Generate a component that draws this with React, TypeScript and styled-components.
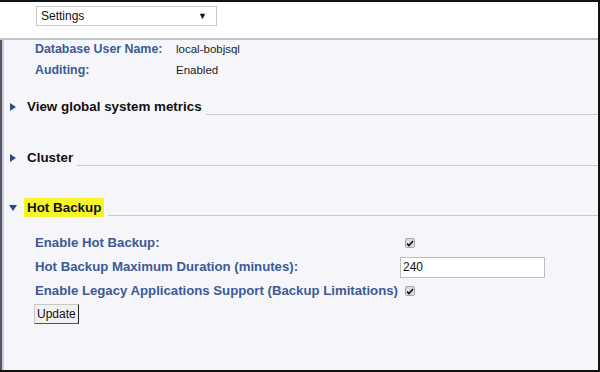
import React from "react";
import styled, {createGlobalStyle} from "styled-components";

const GlobalStyle = createGlobalStyle`
  html, body {
    margin: 0;
    padding: 0;
    background: #ffffff;
  }
  body {
    font-family: "Liberation Sans", Arial, sans-serif;
    font-size: 12px;
  }
`;

const Frame = styled.div`
  width: 600px;
  height: 372px;
  box-sizing: border-box;
  border-top: 2px solid #111;
  border-right: 2px solid #111;
  border-bottom: 2px solid #111;
  display: flex;
  flex-direction: column;
  overflow: hidden;
`;

const TopBar = styled.div`
  height: 38px;
  flex: none;
  background: #ffffff;
  border-bottom: 2px solid #bcc6ca;
  padding: 4px 0 0 36px;
  box-sizing: border-box;
`;

const FakeSelect = styled.div`
  width: 181px;
  height: 20px;
  box-sizing: border-box;
  border: 1px solid #c9c9c9;
  background: #fff;
  display: flex;
  align-items: center;
  justify-content: space-between;
  padding: 0 9px 0 4px;
  font-size: 12px;
  color: #111;
`;

const Caret = styled.span`
  font-size: 9px;
  color: #111;
`;

const Panel = styled.div`
  flex: 1;
  background: #f6f6fa;
  border-left: 2px solid #55555f;
  box-shadow: inset 2px 0 0 #c9cde6;
  padding: 1px 0 0 0;
  display: flex;
  flex-direction: column;
`;

const InfoGrid = styled.div`
  display: grid;
  grid-template-columns: 141px auto;
  row-gap: 4px;
  padding-left: 33px;
`;

const Label = styled.span`
  font-weight: bold;
  color: #3b5a96;
  font-size: 12.4px;
  line-height: 17px;
  white-space: nowrap;
`;

const Value = styled.span`
  color: #1a1a1a;
  font-size: 11.5px;
  line-height: 17px;
`;

const SectionHeader = styled.div<{ $top: number }>`
  display: flex;
  align-items: flex-end;
  margin-top: ${p => p.$top}px;
  padding-left: 6px;
  height: 19px;
`;

const Arrow = styled.span`
  width: 10px;
  display: flex;
  align-items: center;
  justify-content: center;
  margin-right: 9px;
  align-self: center;
`;

const Title = styled.span<{ $highlight?: boolean }>`
  font-weight: bold;
  font-size: 13.4px;
  color: #111;
  line-height: 19px;
  padding: 0 ${p => (p.$highlight ? "3px" : "0")};
  margin-left: ${p => (p.$highlight ? "-3px" : "0")};
  background: ${p => (p.$highlight ? "#f7f529" : "transparent")};
  white-space: nowrap;
`;

const Rule = styled.div`
  flex: 1;
  height: 0;
  border-bottom: 1px solid #c3c7d3;
  margin-left: 4px;
  margin-bottom: 1px;
`;

const FormRows = styled.div`
  display: grid;
  grid-template-columns: 368px auto;
  grid-auto-rows: 24px;
  padding-left: 33px;
  margin-top: 14px;
  align-items: center;
`;

const FormLabel = styled(Label)`
  font-size: 13.2px;
  line-height: 22px;
`;

const CheckBox = styled.span`
  width: 10px;
  height: 10px;
  margin-left: 2px;
  box-sizing: border-box;
  border: 1px solid #a6a6a6;
  border-radius: 2px;
  background: #dcdcdc;
  display: flex;
  align-items: center;
  justify-content: center;
`;

const NumberInput = styled.div`
  width: 145px;
  height: 21px;
  margin-left: -3px;
  box-sizing: border-box;
  border: 1px solid #bdbdbd;
  background: #fff;
  font-size: 12px;
  color: #111;
  padding-left: 2px;
  display: flex;
  align-items: center;
`;

const UpdateButton = styled.button`
  margin: 1px 0 0 32px;
  align-self: flex-start;
  height: 20px;
  padding: 0 2px;
  font-family: "Liberation Sans", Arial, sans-serif;
  font-size: 12px;
  color: #111;
  background: #f1f1f1;
  border: 1px solid #c8c8c8;
  border-right: 1px solid #222;
  border-bottom: 1px solid #555;
  border-radius: 0;
`;

const Check = () => (
  <svg width="8" height="7" viewBox="0 0 8 7">
    <path d="M1 3.6 L3 5.6 L7 1" fill="none" stroke="#111" strokeWidth="1.6"/>
  </svg>
);

const RightArrow = () => (
  <svg width="6" height="8" viewBox="0 0 6 8">
    <path d="M0 0 L6 4 L0 8 Z" fill="#2c4a86"/>
  </svg>
);

const DownArrow = () => (
  <svg width="8" height="6" viewBox="0 0 8 6">
    <path d="M0 0 L8 0 L4 6 Z" fill="#2c4a86"/>
  </svg>
);

export default function App() {
  return (
    <Frame>
      <GlobalStyle/>
      <TopBar>
        <FakeSelect>
          <span>Settings</span>
          <Caret>▼</Caret>
        </FakeSelect>
      </TopBar>
      <Panel>
        <InfoGrid>
          <Label>Database User Name:</Label>
          <Value>local-bobjsql</Value>
          <Label>Auditing:</Label>
          <Value>Enabled</Value>
        </InfoGrid>
        <SectionHeader $top={18}>
          <Arrow><RightArrow/></Arrow>
          <Title>View global system metrics</Title>
          <Rule/>
        </SectionHeader>
        <SectionHeader $top={32}>
          <Arrow><RightArrow/></Arrow>
          <Title>Cluster</Title>
          <Rule/>
        </SectionHeader>
        <SectionHeader $top={31}>
          <Arrow><DownArrow/></Arrow>
          <Title $highlight>Hot Backup</Title>
          <Rule/>
        </SectionHeader>
        <FormRows>
          <FormLabel>Enable Hot Backup:</FormLabel>
          <CheckBox><Check/></CheckBox>
          <FormLabel>Hot Backup Maximum Duration (minutes):</FormLabel>
          <NumberInput>240</NumberInput>
          <FormLabel>Enable Legacy Applications Support (Backup Limitations)</FormLabel>
          <CheckBox><Check/></CheckBox>
        </FormRows>
        <UpdateButton>Update</UpdateButton>
      </Panel>
    </Frame>
  );
}
